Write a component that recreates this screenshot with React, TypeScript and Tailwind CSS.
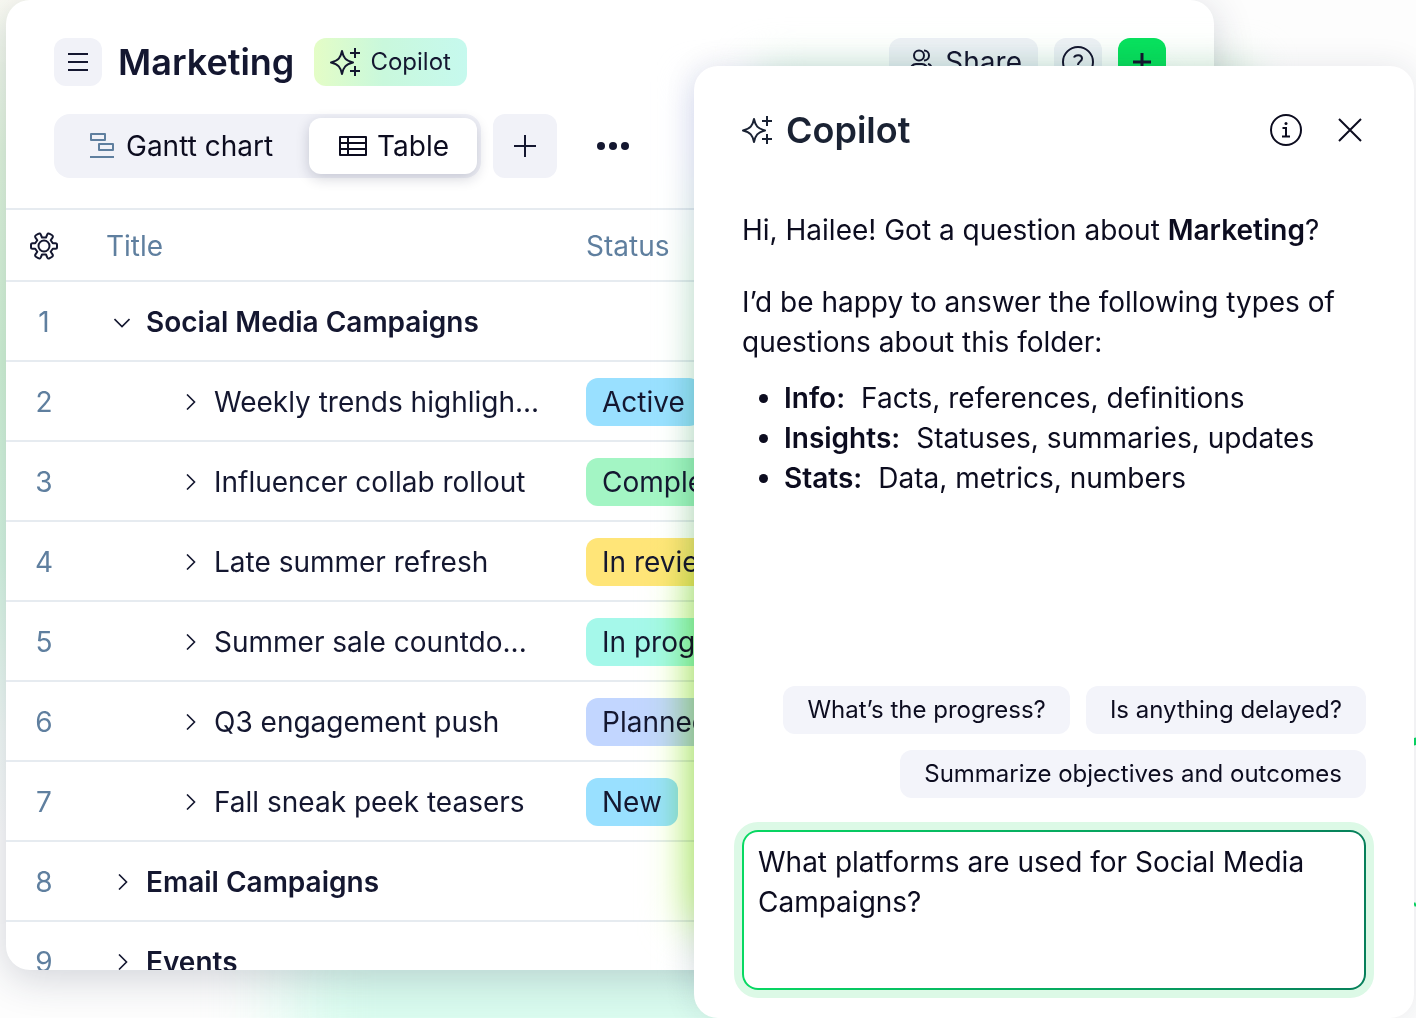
import React, { useState } from "react";
import clsx from "clsx";

type RowType = {
  id: number;
  title: string;
  group?: boolean;
  open?: boolean;
  status?: string;
  color?: string;
};

const rows: RowType[] = [
  { id: 1, title: "Social Media Campaigns", group: true, open: true },
  { id: 2, title: "Weekly trends highligh...", status: "Active", color: "bg-[#99e0ff]" },
  { id: 3, title: "Influencer collab rollout", status: "Completed", color: "bg-[#a3f5c4]" },
  { id: 4, title: "Late summer refresh", status: "In review", color: "bg-[#ffe578]" },
  { id: 5, title: "Summer sale countdo...", status: "In progress", color: "bg-[#a5f8ea]" },
  { id: 6, title: "Q3 engagement push", status: "Planned", color: "bg-[#c2d6ff]" },
  { id: 7, title: "Fall sneak peek teasers", status: "New", color: "bg-[#99e0ff]" },
  { id: 8, title: "Email Campaigns", group: true },
  { id: 9, title: "Events", group: true },
];

const topics = [
  { name: "Info:", text: "Facts, references, definitions" },
  { name: "Insights:", text: "Statuses, summaries, updates" },
  { name: "Stats:", text: "Data, metrics, numbers" },
];

const suggestions = [
  "What’s the progress?",
  "Is anything delayed?",
  "Summarize objectives and outcomes",
];

const SparkleIcon = () => (
  <svg width="32" height="32" viewBox="0 0 32 32" fill="none" stroke="currentColor" strokeWidth="2" className="shrink-0">
    <path
      d="M12 5 C13.500 12 15.500 14.500 23 16.500 C15.500 18.500 13.500 21 12 28 C10.500 21 8.500 18.500 1 16.500 C8.500 14.500 10.500 12 12 5Z"
      strokeLinejoin="round"
    />
    <path d="M25 2v10M20 7h10M25 20v10M20 25h10" />
  </svg>
);

const Chevron = ({ open }: { open?: boolean }) => (
  <svg
    width="16"
    height="16"
    viewBox="0 0 16 16"
    fill="none"
    stroke="currentColor"
    strokeWidth="1.6"
    className={clsx("shrink-0", open && "rotate-90")}
  >
    <path d="M5 0.500 12.500 8 5 15.500" />
  </svg>
);

const GearIcon = () => (
  <svg width="32" height="32" viewBox="0 0 32 32" fill="none" stroke="currentColor" strokeWidth="2" strokeLinejoin="round">
    <circle cx="16" cy="16" r="5.500" />
    <path d="M14 7.500 12.800 4.600Q12 2.800 10.300 3.800L8.200 5Q6.500 6 7.500 7.600L9.300 10.200 7.200 13.200H4.500Q3 13.200 3 14.700V17.300Q3 18.800 4.500 18.800H7.200L9.300 21.800 7.500 24.400Q6.500 26 8.200 27L10.300 28.200Q12 29.200 12.800 27.400L14 24.500H18L19.200 27.400Q20 29.200 21.700 28.200L23.800 27Q25.500 26 24.500 24.400L22.700 21.800 24.800 18.800H27.500Q29 18.800 29 17.300V14.700Q29 13.200 27.500 13.200H24.800L22.700 10.200 24.500 7.600Q25.500 6 23.800 5L21.700 3.800Q20 2.800 19.200 4.600L18 7.500Z" />
  </svg>
);

const TopBar = () => {
  return (
    <div className="flex items-center justify-between">
      <div className="flex items-center">
        <button aria-label="Menu" className="flex h-12 w-12 items-center justify-center rounded-xl bg-[#f1f2f8]">
          <svg width="20" height="20" viewBox="0 0 20 20" stroke="currentColor" strokeWidth="2">
            <path d="M0 2h20M0 10h20M0 18h20" />
          </svg>
        </button>
        <h1 className="ml-4 text-[36px] leading-12 font-semibold">Marketing</h1>
        <button className="ml-5 flex h-12 items-center gap-2 rounded-xl bg-linear-to-r from-[#e4fdc6] via-[#c9f8dc] via-45% to-[#c6f9ee] px-4 text-2xl">
          <SparkleIcon />
          Copilot
        </button>
      </div>
      <div className="flex items-center gap-4">
        <button className="flex h-12 items-center gap-3 rounded-xl bg-[#eff1f7] pr-4 pl-5 text-[28px]">
          <svg width="24" height="28" viewBox="0 0 24 28" fill="none" stroke="currentColor" strokeWidth="2">
            <circle cx="10" cy="7.500" r="5" />
            <path d="M15 2.500a5 5 0 0 1 0 10" />
            <path d="M1 25v-2c0-4 3-7 6-7h6c3 0 6 3 6 7v2Z" />
            <path d="M19 16c2.500 .5 4 3 4 7v2h-2" />
          </svg>
          Share
        </button>
        <button aria-label="Help" className="flex h-12 w-12 items-center justify-center rounded-xl bg-[#eff1f7]">
          <svg width="32" height="32" viewBox="0 0 32 32" fill="none" stroke="currentColor" strokeWidth="2">
            <circle cx="16" cy="16" r="15" />
            <path d="M12 11.500C13 8.500 20 8 20 12.500C20 15.500 16 15.500 16 19M16 21.500v2.500" />
          </svg>
        </button>
        <button aria-label="Create" className="flex h-12 w-12 items-center justify-center rounded-xl bg-[#08e25f]">
          <svg width="20" height="20" viewBox="0 0 20 20" stroke="currentColor" strokeWidth="3">
            <path d="M10 1v18M1 10h18" />
          </svg>
        </button>
      </div>
    </div>
  );
};

const ViewTabs = () => {
  return (
    <div className="mt-7 flex items-center">
      <div className="flex h-16 items-center rounded-2xl bg-[#f1f2f8] p-1 text-[28px] text-[#0c0c1f]">
        <button className="flex h-14 items-center gap-2 pr-9 pl-7">
          <svg width="32" height="32" viewBox="0 0 32 32" fill="none" stroke="#5f7f9f" strokeWidth="2" strokeLinejoin="round">
            <path d="M5 4h14v6H5zM13 14h14v6H13zM4 27h24" />
          </svg>
          Gantt chart
        </button>
        <button className="flex h-14 items-center gap-2 rounded-xl bg-white px-7 shadow-[0_4px_14px_rgba(20,25,60,0.2)]">
          <svg width="32" height="32" viewBox="0 0 32 32" fill="none" stroke="currentColor" strokeWidth="2" strokeLinejoin="round">
            <path d="M3 7h26v18H3zM3 13h26M3 19h26M11 7v18" />
          </svg>
          Table
        </button>
      </div>
      <button aria-label="Add view" className="ml-3 flex h-16 w-16 items-center justify-center rounded-xl bg-[#f1f2f8]">
        <svg width="24" height="24" viewBox="0 0 24 24" stroke="currentColor" strokeWidth="2">
          <path d="M12 1v22M1 12h22" />
        </svg>
      </button>
      <button aria-label="More" className="ml-9 p-1">
        <svg width="32" height="8" viewBox="0 0 32 8" fill="currentColor">
          <circle cx="4" cy="4" r="4" />
          <circle cx="16" cy="4" r="4" />
          <circle cx="28" cy="4" r="4" />
        </svg>
      </button>
    </div>
  );
};

const TaskTable = () => {
  return (
    <table className="mt-[30px] w-full table-fixed text-left text-[28px] leading-10">
      <thead>
        <tr className="h-[72px] border-y-2 border-[#e6ebf0] text-[#5f7f9f]">
          <th className="w-[76px] pt-[2px] font-normal">
            <button aria-label="Table settings" className="mx-auto block text-[#141730]">
              <GearIcon />
            </button>
          </th>
          <th className="w-[504px] pt-[2px] pl-6 font-normal">Title</th>
          <th className="pt-[2px] font-normal">Status</th>
        </tr>
      </thead>
      <tbody>
        {rows.map((row) => (
          <tr key={row.id} className="h-20 border-b-2 border-[#e6ebf0]">
            <td className="pt-[2px] text-center text-[#5f7f9f]">{row.id}</td>
            <td className="pt-[2px]">
              <div className={clsx("flex items-center gap-4", row.group ? "pl-8" : "pl-[100px]")}>
                <Chevron open={row.open} />
                <span className={clsx("truncate", row.group && "font-semibold")}>{row.title}</span>
              </div>
            </td>
            <td className="pt-[2px]">
              {row.status && (
                <span className={clsx("inline-block h-12 rounded-xl px-4 align-middle leading-12", row.color)}>
                  {row.status}
                </span>
              )}
            </td>
          </tr>
        ))}
      </tbody>
    </table>
  );
};

const CopilotPanel = () => {
  const [question, setQuestion] = useState("What platforms are used for Social Media Campaigns?");

  return (
    <aside className="absolute top-[66px] right-[2px] w-[720px] text-[#0c0c1f]">
      {/* Glow */}
      <div className="absolute top-4 right-64 bottom-12 left-0 bg-[linear-gradient(to_bottom,#dfe4fb_0%,#dfe4fb_8%,#c9eed8_22%,#b3e4c0_45%,#c4eb9f_62%,#c6ee98_88%,#dce6f2_100%)] mix-blend-multiply blur-[18px]" />
      <div className="absolute top-[500px] bottom-24 -left-3 w-40 bg-[#e2ffb4] mix-blend-multiply blur-[20px]" />
      <div className="absolute top-0 right-40 left-16 h-20 bg-[#d5f3dc] mix-blend-multiply blur-[20px]" />

      <div className="relative rounded-[24px] bg-white px-12 pt-11 pb-7 shadow-[0_0_32px_rgba(30,40,70,0.1)]">
        <div className="flex items-center justify-between text-[#1a2233]">
          <div className="flex items-center gap-3">
            <SparkleIcon />
            <h2 className="text-[36px] leading-10 font-semibold">Copilot</h2>
          </div>
          <div className="flex items-center gap-8 text-[#0c0c1f]">
            <button aria-label="Info">
              <svg width="32" height="32" viewBox="0 0 32 32" fill="none" stroke="currentColor" strokeWidth="2">
                <circle cx="16" cy="16" r="15" />
                <path d="M12.500 14h3.500v8M12 22.500h8" />
                <circle cx="16" cy="9.500" r="1.500" fill="currentColor" stroke="none" />
              </svg>
            </button>
            <button aria-label="Close">
              <svg width="32" height="32" viewBox="0 0 32 32" stroke="currentColor" strokeWidth="2">
                <path d="M5 5l22 22M27 5 5 27" />
              </svg>
            </button>
          </div>
        </div>

        <div className="mt-15 text-[28px] leading-10">
          <p>
            Hi, Hailee! Got a question about <strong className="font-semibold">Marketing</strong>?
          </p>
          <p className="mt-8">I’d be happy to answer the following types of questions about this folder:</p>
          <ul className="mt-4 list-disc pl-[42px]">
            {topics.map((topic) => (
              <li key={topic.name}>
                <strong className="mr-4 font-semibold">{topic.name}</strong>
                {topic.text}
              </li>
            ))}
          </ul>
        </div>

        <div className="mt-[188px] flex flex-wrap justify-end gap-4">
          {suggestions.map((text) => (
            <button key={text} className="h-12 rounded-xl bg-[#f3f4fa] px-6 text-2xl">
              {text}
            </button>
          ))}
        </div>

        <div className="mt-8 rounded-2xl bg-linear-to-r from-[#08d962] to-[#06805a] p-[2px] shadow-[0_0_0_8px_#dcf9e6]">
          <textarea
            aria-label="Ask Copilot"
            value={question}
            onChange={(e) => setQuestion(e.target.value)}
            className="block h-[156px] w-full resize-none rounded-[14px] bg-white px-[14px] py-[10px] text-[28px] leading-10 outline-none"
          />
        </div>
      </div>
    </aside>
  );
};

const App = () => {
  return (
    <div className="relative isolate h-screen overflow-hidden bg-[#fdfdfd] font-['Inter',sans-serif] text-[#141730]">
      {/* Background colours */}
      <div className="absolute top-0 left-0 -z-10 h-full w-16 bg-[linear-gradient(to_bottom,#fbfbf4_0%,#e2f7de_15%,#d2f5d6_35%,#d6f7e2_55%,#f4fbf8_72%,#fdfdfd_82%)]" />
      <div className="absolute -bottom-16 left-72 -z-10 h-40 w-[500px] bg-[#d8fbee] blur-[40px]" />

      <main className="mr-[202px] ml-[6px] h-[970px] overflow-hidden rounded-[24px] bg-white pt-[38px] shadow-[0_8px_40px_rgba(30,40,70,0.2)]">
        <div className="px-12">
          <TopBar />
          <ViewTabs />
        </div>
        <TaskTable />
      </main>

      {/* Connector ends at the right edge */}
      <svg className="absolute top-[736px] right-0" width="2" height="174" viewBox="0 0 2 174" stroke="#08d962" strokeWidth="4">
        <path d="M0 2 2 9M0 169 2 168" />
      </svg>

      <CopilotPanel />
    </div>
  );
};

export default App;
